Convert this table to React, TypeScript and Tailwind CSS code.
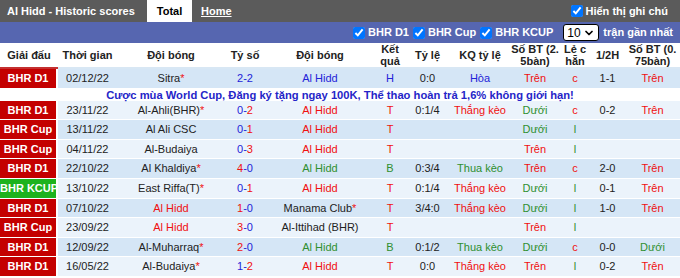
import { ChevronDown } from 'lucide-react'

type Row = {
  lg: string
  date: string
  home: string
  homeStar?: boolean
  homeColor: string
  score: [number, number]
  away: string
  awayStar?: boolean
  awayColor: string
  res: string
  hc: string
  hcr: string
  ou: string
  oe: string
  ht: string
  ou2: string
}

const RED = 'text-[#f01010]'
const GREEN = 'text-[#2f8f2f]'
const BLUE = 'text-[#2323d8]'
const DARK = 'text-[#222]'

const rows: Row[] = [
  { lg: 'BHR D1', date: '02/12/22', home: 'Sitra', homeStar: true, homeColor: DARK, score: [2, 2], away: 'Al Hidd', awayColor: BLUE, res: 'H', hc: '0:0', hcr: 'Hòa', ou: 'Trên', oe: 'c', ht: '1-1', ou2: 'Trên' },
  { lg: 'BHR D1', date: '23/11/22', home: 'Al-Ahli(BHR)', homeStar: true, homeColor: DARK, score: [0, 2], away: 'Al Hidd', awayColor: RED, res: 'T', hc: '0:1/4', hcr: 'Thắng kèo', ou: 'Dưới', oe: 'c', ht: '0-2', ou2: 'Trên' },
  { lg: 'BHR Cup', date: '13/11/22', home: 'Al Ali CSC', homeColor: DARK, score: [0, 1], away: 'Al Hidd', awayColor: RED, res: 'T', hc: '', hcr: '', ou: 'Dưới', oe: 'l', ht: '', ou2: '' },
  { lg: 'BHR Cup', date: '04/11/22', home: 'Al-Budaiya', homeColor: DARK, score: [0, 3], away: 'Al Hidd', awayColor: RED, res: 'T', hc: '', hcr: '', ou: 'Trên', oe: 'l', ht: '', ou2: '' },
  { lg: 'BHR D1', date: '22/10/22', home: 'Al Khaldiya', homeStar: true, homeColor: DARK, score: [4, 0], away: 'Al Hidd', awayColor: GREEN, res: 'B', hc: '0:3/4', hcr: 'Thua kèo', ou: 'Trên', oe: 'c', ht: '2-0', ou2: 'Trên' },
  { lg: 'BHR KCUP', date: '13/10/22', home: 'East Riffa(T)', homeStar: true, homeColor: DARK, score: [0, 1], away: 'Al Hidd', awayColor: RED, res: 'T', hc: '0:1/4', hcr: 'Thắng kèo', ou: 'Dưới', oe: 'l', ht: '0-1', ou2: 'Trên' },
  { lg: 'BHR D1', date: '07/10/22', home: 'Al Hidd', homeColor: RED, score: [1, 0], away: 'Manama Club', awayStar: true, awayColor: DARK, res: 'T', hc: '3/4:0', hcr: 'Thắng kèo', ou: 'Dưới', oe: 'l', ht: '1-0', ou2: 'Trên' },
  { lg: 'BHR Cup', date: '23/09/22', home: 'Al Hidd', homeColor: RED, score: [3, 0], away: 'Al-Ittihad (BHR)', awayColor: DARK, res: 'T', hc: '', hcr: '', ou: 'Trên', oe: 'l', ht: '', ou2: '' },
  { lg: 'BHR D1', date: '12/09/22', home: 'Al-Muharraq', homeStar: true, homeColor: DARK, score: [2, 0], away: 'Al Hidd', awayColor: GREEN, res: 'B', hc: '0:1/2', hcr: 'Thua kèo', ou: 'Dưới', oe: 'c', ht: '0-0', ou2: 'Dưới' },
  { lg: 'BHR D1', date: '16/05/22', home: 'Al-Budaiya', homeStar: true, homeColor: DARK, score: [1, 2], away: 'Al Hidd', awayColor: RED, res: 'T', hc: '0:0', hcr: 'Thắng kèo', ou: 'Trên', oe: 'l', ht: '0-2', ou2: 'Trên' },
]

const resColor = (r: string) => (r === 'T' ? RED : r === 'B' ? GREEN : BLUE)
const hcrColor = (r: string) => (r.startsWith('Thắng') ? RED : r.startsWith('Thua') ? GREEN : BLUE)
const ouColor = (r: string) => (r === 'Trên' ? RED : GREEN)

function Score({ score }: { score: [number, number] }) {
  const [h, a] = score
  if (h === a) return <span className={BLUE}>{h}-{a}</span>
  if (h > a)
    return (
      <span>
        <span className={RED}>{h}</span>
        <span className={BLUE}>-{a}</span>
      </span>
    )
  return (
    <span>
      <span className={BLUE}>{h}-</span>
      <span className={RED}>{a}</span>
    </span>
  )
}

function Team({ name, star, color }: { name: string; star?: boolean; color: string }) {
  return (
    <span className={color}>
      {name}
      {star && <span className={RED}>*</span>}
    </span>
  )
}

function Check({ label }: { label: string }) {
  return (
    <label className="flex items-center gap-[3px] whitespace-nowrap">
      <input type="checkbox" defaultChecked className="m-0 h-3 w-3" />
      <span>{label}</span>
    </label>
  )
}

function DataRow({ r, i }: { r: Row; i: number }) {
  const bg = i % 2 === 0 ? 'bg-[#d5e6f6]' : 'bg-[#ebf3fb]'
  const cell = `${bg} border-b border-white text-center whitespace-nowrap overflow-hidden p-0`
  return (
    <tr className="h-[19.6px]">
      <td
        className={`border-b border-r-2 border-white p-0 text-center font-bold whitespace-nowrap text-white ${
          r.lg === 'BHR KCUP' ? 'bg-[#1db31d]' : 'bg-[#c40000]'
        }`}
      >
        {r.lg}
      </td>
      <td className={`${cell} ${DARK}`}>{r.date}</td>
      <td className={cell}>
        <Team name={r.home} star={r.homeStar} color={r.homeColor} />
      </td>
      <td className={cell}>
        <Score score={r.score} />
      </td>
      <td className={cell}>
        <Team name={r.away} star={r.awayStar} color={r.awayColor} />
      </td>
      <td className={`${cell} ${resColor(r.res)}`}>{r.res}</td>
      <td className={`${cell} ${DARK}`}>{r.hc}</td>
      <td className={`${cell} ${hcrColor(r.hcr)}`}>{r.hcr}</td>
      <td className={`${cell} ${ouColor(r.ou)}`}>{r.ou}</td>
      <td className={`${cell} ${r.oe === 'c' ? RED : GREEN}`}>{r.oe}</td>
      <td className={`${cell} ${DARK}`}>{r.ht}</td>
      <td className={`${cell} ${ouColor(r.ou2)}`}>{r.ou2}</td>
    </tr>
  )
}

export default function App() {
  // '|' marks where the header wraps in the original
  const headers = [
    'Thời gian',
    'Đội bóng',
    'Tỷ số',
    'Đội bóng',
    'Kết|quả',
    'Tỷ lệ',
    'KQ tỷ lệ',
    'Số BT (2.|5bàn)',
    'Lẻ c|hẵn',
    '1/2H',
    'Số BT (0.|75bàn)',
  ]
  return (
    <div className="w-[680px] h-[278px] overflow-hidden bg-white font-['Liberation_Sans',Arial,sans-serif] text-[11px]">
      {/* tabs */}
      <div className="flex h-[22px] items-stretch bg-[#5b5b5b] text-[11px] font-bold text-white">
        <div className="flex w-[145px] items-center whitespace-nowrap pl-[7px]">Al Hidd - Historic scores</div>
        <div className="ml-[2px] flex w-[45px] items-center justify-center bg-white text-black">Total</div>
        <div className="flex items-center pl-[9px] underline">Home</div>
        <div className="ml-auto flex items-center pr-[12px]">
          <Check label="Hiển thị ghi chú" />
        </div>
      </div>
      {/* filter bar */}
      <div className="flex h-[21px] items-center justify-end gap-[4px] bg-[#5666b0] pr-[7px] text-[11px] font-bold text-white">
        <Check label="BHR D1" />
        <Check label="BHR Cup" />
        <Check label="BHR KCUP" />
        <div className="ml-[6px] flex h-[17px] w-[36px] items-center justify-between rounded-[3px] border border-black bg-white px-[3px] text-[12px] font-normal text-black">
          10
          <ChevronDown size={12} strokeWidth={3.5} />
        </div>
        <span className="whitespace-nowrap">trận gần nhất</span>
      </div>
      <table className="w-[680px] table-fixed border-separate border-spacing-0">
        <colgroup>
          <col className="w-[58px]" />
          <col className="w-[59px]" />
          <col className="w-[108px]" />
          <col className="w-[40px]" />
          <col className="w-[110px]" />
          <col className="w-[30px]" />
          <col className="w-[45px]" />
          <col className="w-[60px]" />
          <col className="w-[50px]" />
          <col className="w-[30px]" />
          <col className="w-[35px]" />
          <col className="w-[55px]" />
        </colgroup>
        <thead>
          <tr className="h-[26px]">
            <th className="border-b-2 border-[#c43030] p-0 text-center font-bold leading-[12px] text-[#222]">Giải đấu</th>
            {headers.map((h, i) => {
              const [a, b] = h.split('|')
              return (
                <th
                  key={i}
                  className="whitespace-nowrap border-b-2 border-[#d8e7f4] p-0 text-center font-bold leading-[12px] text-[#222]"
                >
                  {a}
                  {b && (
                    <>
                      <br />
                      {b}
                    </>
                  )}
                </th>
              )
            })}
          </tr>
        </thead>
        <tbody>
          <DataRow r={rows[0]} i={0} />
          <tr className="h-[12px]">
            <td colSpan={12} className="p-0 text-center text-[11.2px] font-bold leading-[12px] whitespace-nowrap text-[#2525c8]">
              Cược mùa World Cup, Đăng ký tặng ngay 100K, Thể thao hoàn trả 1,6% không giới hạn!
            </td>
          </tr>
          {rows.slice(1).map((r, i) => (
            <DataRow key={i} r={r} i={i + 1} />
          ))}
        </tbody>
      </table>
    </div>
  )
}
